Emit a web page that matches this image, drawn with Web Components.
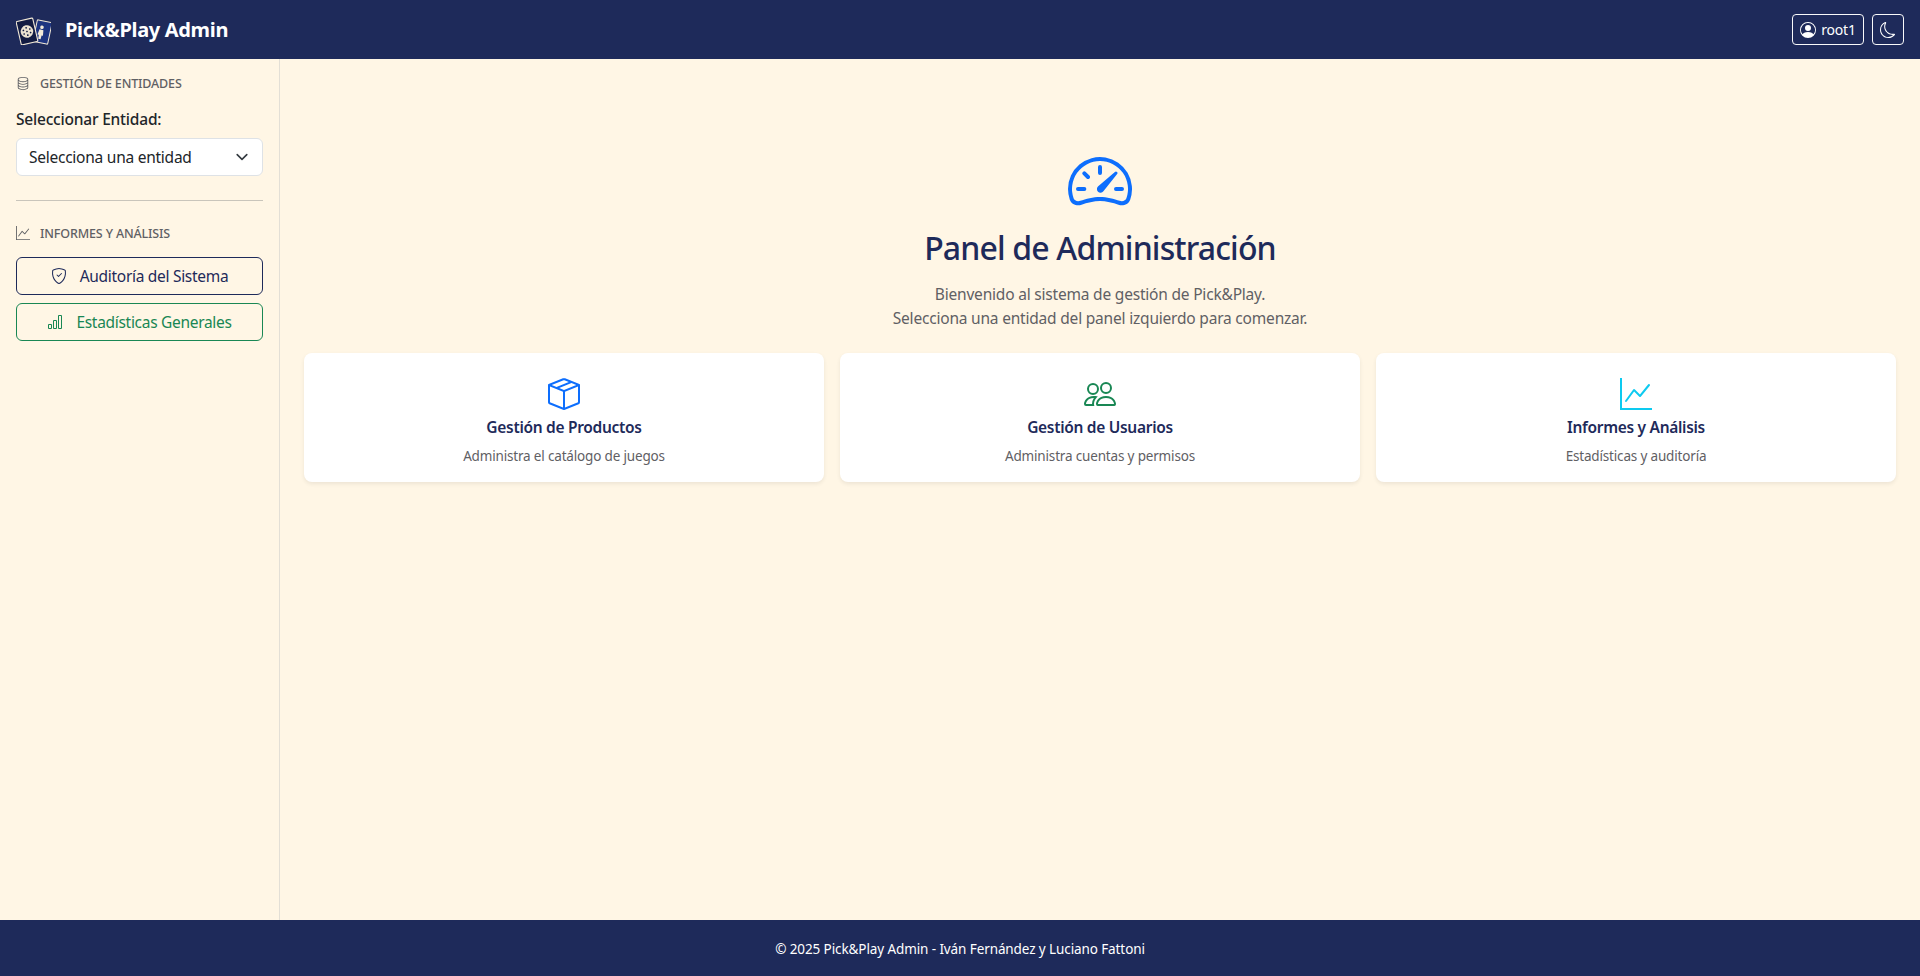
<!DOCTYPE html>
<html lang="es">
<head>
<meta charset="utf-8">
<title>Pick&amp;Play Admin</title>
<style>
  html, body { margin: 0; height: 100%; }
  body {
    font-family: "Noto Sans", "Open Sans", sans-serif;
    font-size: 16px;
    color: #212529;
    background: #fff6e5;
  }
</style>
</head>
<body>
<admin-app>
  <app-header slot="header"></app-header>
  <app-sidebar slot="sidebar">
    <side-section icon="database" title="Gestión de entidades">
      <entity-select label="Seleccionar Entidad:" placeholder="Selecciona una entidad"></entity-select>
    </side-section>
    <side-section icon="graph-up" title="Informes y análisis" divided>
      <nav-button icon="shield-check" color="#1e2a5a">Auditoría del Sistema</nav-button>
      <nav-button icon="bar-chart" color="#198754">Estadísticas Generales</nav-button>
    </side-section>
  </app-sidebar>
  <welcome-panel slot="main">
    <info-card icon="box-seam" color="#0d6efd" title="Gestión de Productos">Administra el catálogo de juegos</info-card>
    <info-card icon="people" color="#198754" title="Gestión de Usuarios">Administra cuentas y permisos</info-card>
    <info-card icon="graph-up" color="#0dcaf0" title="Informes y Análisis">Estadísticas y auditoría</info-card>
  </welcome-panel>
  <app-footer slot="footer">© 2025 Pick&amp;Play Admin - Iván Fernández y Luciano Fattoni</app-footer>
</admin-app>

<script>
const ICONS = {
  'speedometer2': 'M8 4a.5.5 0 0 1 .5.5V6a.5.5 0 0 1-1 0V4.5A.5.5 0 0 1 8 4M3.732 5.732a.5.5 0 0 1 .707 0l.915.914a.5.5 0 1 1-.708.708l-.914-.915a.5.5 0 0 1 0-.707M2 10a.5.5 0 0 1 .5-.5h1.586a.5.5 0 0 1 0 1H2.5A.5.5 0 0 1 2 10m9.5 0a.5.5 0 0 1 .5-.5h1.5a.5.5 0 0 1 0 1H12a.5.5 0 0 1-.5-.5m.754-4.246a.39.39 0 0 0-.527-.02L7.547 9.31a.91.91 0 1 0 1.302 1.258l3.434-4.297a.39.39 0 0 0-.029-.518z M0 10a8 8 0 1 1 15.547 2.661c-.442 1.253-1.845 1.602-2.932 1.25C11.309 13.488 9.475 13 8 13c-1.474 0-3.31.488-4.615.911-1.087.352-2.49.003-2.932-1.25A8 8 0 0 1 0 10m8-7a7 7 0 0 0-6.603 9.329c.203.575.923.876 1.68.63C4.397 12.533 6.358 12 8 12s3.604.532 4.923.96c.757.245 1.477-.056 1.68-.631A7 7 0 0 0 8 3',
  'box-seam': 'M8.186 1.113a.5.5 0 0 0-.372 0L1.846 3.5l2.404.961L10.404 2zm3.564 1.426L5.596 5 8 5.961 14.154 3.5zm3.25 1.7-6.5 2.6v7.922l6.5-2.6V4.24zM7.5 14.762V6.838L1 4.239v7.925zM7.443.184a1.5 1.5 0 0 1 1.114 0l7.129 2.852A.5.5 0 0 1 16 3.5v8.662a1 1 0 0 1-.629.928l-7.185 2.874a.5.5 0 0 1-.372 0L.63 13.09a1 1 0 0 1-.63-.928V3.5a.5.5 0 0 1 .314-.464z',
  'people': 'M15 14s1 0 1-1-1-4-5-4-5 3-5 4 1 1 1 1zm-7.978-1L7 12.996c.001-.264.167-1.03.76-1.72C8.312 10.629 9.282 10 11 10c1.717 0 2.687.63 3.24 1.276.593.69.758 1.457.76 1.72l-.008.002-.014.002zM11 7a2 2 0 1 0 0-4 2 2 0 0 0 0 4m3-2a3 3 0 1 1-6 0 3 3 0 0 1 6 0M6.936 9.28a6 6 0 0 0-1.23-.247A7 7 0 0 0 5 9c-4 0-5 3-5 4q0 1 1 1h4.216A2.24 2.24 0 0 1 5 13c0-1.01.377-2.042 1.09-2.904.243-.294.526-.569.846-.816M4.92 10A5.5 5.5 0 0 0 4 13H1c0-.26.164-1.03.76-1.724.545-.636 1.492-1.256 3.16-1.275ZM1.5 5.5a3 3 0 1 1 6 0 3 3 0 0 1-6 0m3-2a2 2 0 1 0 0 4 2 2 0 0 0 0-4',
  'graph-up': 'M0 0h1v15h15v1H0zm14.817 3.113a.5.5 0 0 1 .07.704l-4.5 5.5a.5.5 0 0 1-.74.037L7.06 6.767l-3.656 5.027a.5.5 0 0 1-.808-.588l4-5.5a.5.5 0 0 1 .758-.06l2.609 2.61 4.15-5.073a.5.5 0 0 1 .704-.07',
  'database': 'M4.318 2.687C5.234 2.271 6.536 2 8 2s2.766.27 3.682.687C12.644 3.125 13 3.627 13 4c0 .374-.356.875-1.318 1.313C10.766 5.729 9.464 6 8 6s-2.766-.27-3.682-.687C3.356 4.875 3 4.373 3 4c0-.374.356-.875 1.318-1.313M13 5.698V7c0 .374-.356.875-1.318 1.313C10.766 8.729 9.464 9 8 9s-2.766-.27-3.682-.687C3.356 7.875 3 7.373 3 7V5.698c.271.202.58.378.904.525C4.978 6.711 6.427 7 8 7s3.022-.289 4.096-.777A5 5 0 0 0 13 5.698M14 4c0-1.007-.875-1.755-1.904-2.223C11.022 1.289 9.573 1 8 1s-3.022.289-4.096.777C2.875 2.245 2 2.993 2 4v9c0 1.007.875 1.755 1.904 2.223C4.978 15.71 6.427 16 8 16s3.022-.289 4.096-.777C13.125 14.755 14 14.007 14 13zm-1 4.698V10c0 .374-.356.875-1.318 1.313C10.766 11.729 9.464 12 8 12s-2.766-.27-3.682-.687C3.356 10.875 3 10.373 3 10V8.698c.271.202.58.378.904.525C4.978 9.71 6.427 10 8 10s3.022-.289 4.096-.777A5 5 0 0 0 13 8.698m0 3V13c0 .374-.356.875-1.318 1.313C10.766 14.729 9.464 15 8 15s-2.766-.27-3.682-.687C3.356 13.875 3 13.373 3 13v-1.302c.271.202.58.378.904.525C4.978 12.71 6.427 13 8 13s3.022-.289 4.096-.777c.324-.147.633-.323.904-.525',
  'shield-check': 'M5.338 1.59a61 61 0 0 0-2.837.856.48.48 0 0 0-.328.39c-.554 4.157.726 7.19 2.253 9.188a10.7 10.7 0 0 0 2.287 2.233c.346.244.652.42.893.533q.18.085.293.118a1 1 0 0 0 .101.025 1 1 0 0 0 .1-.025q.114-.034.294-.118c.24-.113.547-.29.893-.533a10.7 10.7 0 0 0 2.287-2.233c1.527-1.997 2.807-5.031 2.253-9.188a.48.48 0 0 0-.328-.39c-.651-.213-1.75-.56-2.837-.855C9.552 1.29 8.531 1.067 8 1.067c-.53 0-1.552.223-2.662.524zM5.072.56C6.157.265 7.31 0 8 0s1.843.265 2.928.56c1.11.3 2.229.655 2.887.87a1.54 1.54 0 0 1 1.044 1.262c.596 4.477-.787 7.795-2.465 9.99a11.8 11.8 0 0 1-2.517 2.453 7 7 0 0 1-1.048.625c-.28.132-.581.24-.829.24s-.548-.108-.829-.24a7 7 0 0 1-1.048-.625 11.8 11.8 0 0 1-2.517-2.453C1.928 10.487.545 7.169 1.141 2.692A1.54 1.54 0 0 1 2.185 1.43 63 63 0 0 1 5.072.56 M10.854 5.146a.5.5 0 0 1 0 .708l-3 3a.5.5 0 0 1-.708 0l-1.5-1.5a.5.5 0 1 1 .708-.708L7.5 7.793l2.646-2.647a.5.5 0 0 1 .708 0',
  'bar-chart': 'M4 11H2v3h2zm5-4H7v7h2zm5-5v12h-2V2zm-2-1a1 1 0 0 0-1 1v12a1 1 0 0 0 1 1h2a1 1 0 0 0 1-1V2a1 1 0 0 0-1-1zM6 7a1 1 0 0 1 1-1h2a1 1 0 0 1 1 1v7a1 1 0 0 1-1 1H7a1 1 0 0 1-1-1zm-5 4a1 1 0 0 1 1-1h2a1 1 0 0 1 1 1v3a1 1 0 0 1-1 1H2a1 1 0 0 1-1-1z',
  'person-circle': 'M11 6a3 3 0 1 1-6 0 3 3 0 0 1 6 0 M0 8a8 8 0 1 1 16 0A8 8 0 0 1 0 8m8-7a7 7 0 0 0-5.468 11.37C3.242 11.226 4.805 10 8 10s4.757 1.225 5.468 2.37A7 7 0 0 0 8 1',
  'moon': 'M6 .278a.77.77 0 0 1 .08.858 7.2 7.2 0 0 0-.878 3.46c0 4.021 3.278 7.277 7.318 7.277q.792-.001 1.533-.16a.79.79 0 0 1 .81.316.73.73 0 0 1-.031.893A8.35 8.35 0 0 1 8.344 16C3.734 16 0 12.286 0 7.71 0 4.266 2.114 1.312 5.124.06A.75.75 0 0 1 6 .278M4.858 1.311A7.27 7.27 0 0 0 1.025 7.71c0 4.02 3.279 7.276 7.319 7.276a7.32 7.32 0 0 0 5.205-2.162q-.506.063-1.029.063c-4.61 0-8.343-3.714-8.343-8.29 0-1.167.242-2.278.681-3.286'
}

const iconMarkup = (name, size, color = 'currentColor') =>
  `<svg xmlns="http://www.w3.org/2000/svg" width="${size}" height="${size}" viewBox="0 0 16 16" fill="${color}" style="display:block;flex:none"><path fill-rule="evenodd" d="${ICONS[name]}"/></svg>`

/**
 * Defines a custom element whose shadow root holds the given markup.
 */
const define = (name, html, onCreate) => {
  const template = document.createElement('template')
  template.innerHTML = html
  customElements.define(name, class extends HTMLElement {
    constructor () {
      super()
      this.attachShadow({ mode: 'open' })
        .appendChild(template.content.cloneNode(true))
    }

    connectedCallback () {
      if (onCreate) onCreate(this, this.shadowRoot)
    }
  })
}

define('admin-app', `
  <style>
    :host {
      display: grid;
      grid-template: 59px 861px 56px / 280px 1fr;
      height: 976px;
      overflow: hidden;
    }
    ::slotted([slot=header]), ::slotted([slot=footer]) { grid-column: 1 / -1; }
  </style>
  <slot name="header"></slot>
  <slot name="sidebar"></slot>
  <slot name="main"></slot>
  <slot name="footer"></slot>
`)

define('app-header', `
  <style>
    :host {
      display: flex;
      align-items: center;
      justify-content: space-between;
      background: #1e2a5a;
      color: #fff;
      padding: 0 16px;
    }
    .brand { display: flex; align-items: center; gap: 14px; }
    .brand svg { display: block; }
    .title { font-size: 20px; font-weight: 700; letter-spacing: -0.33px; line-height: 24px; }
    .actions { display: flex; gap: 8px; }
    button {
      display: flex;
      align-items: center;
      justify-content: center;
      gap: 5px;
      height: 31px;
      box-sizing: border-box;
      padding: 0 8px;
      background: transparent;
      color: #fff;
      border: 1px solid #f8f9fa;
      border-radius: 4px;
      font: inherit;
      font-size: 14px;
      letter-spacing: -0.2px;
    }
    #user { width: 72px; }
    #theme { width: 32px; padding: 0; }
  </style>
  <div class="brand">
    <svg width="35" height="30" viewBox="0 0 35 30">
      <g transform="rotate(12 26.5 17)">
        <rect x="19" y="6" width="15" height="22" rx="1" fill="#1d3480" stroke="#f3ead8" stroke-width="1"/>
        <circle cx="25" cy="12.5" r="1.8" fill="#f3ead8"/>
        <path d="M23 15h4l.7 5.5h-1.4l-.2 4h-2.4l-.2-4h-1.4z" fill="#f3ead8"/>
      </g>
      <g transform="rotate(-13 11 16.5)">
        <rect x="2.5" y="4.5" width="17" height="24" rx="1" fill="#121b42" stroke="#f3ead8" stroke-width="1.1"/>
        <circle cx="11" cy="16.5" r="6.3" fill="#e9e1d0"/>
        <g fill="#121b42">
          <circle cx="11" cy="12.7" r=".85"/><circle cx="7.7" cy="14.7" r=".85"/><circle cx="14.3" cy="14.7" r=".85"/>
          <circle cx="7.7" cy="18.3" r=".85"/><circle cx="14.3" cy="18.3" r=".85"/>
          <circle cx="11" cy="20.3" r=".85"/><circle cx="11" cy="16.5" r=".85"/>
        </g>
      </g>
    </svg>
    <span class="title">Pick&amp;Play Admin</span>
  </div>
  <div class="actions">
    <button id="user">${iconMarkup('person-circle', 16)}<span>root1</span></button>
    <button id="theme">${iconMarkup('moon', 16)}</button>
  </div>
`)

define('app-sidebar', `
  <style>
    :host {
      display: block;
      box-sizing: border-box;
      border-right: 1px solid #e3dfd6;
      padding: 16px;
    }
  </style>
  <slot></slot>
`)

define('side-section', `
  <style>
    :host { display: block; }
    :host([divided]) {
      border-top: 1px solid #c9c5bb;
      margin-top: 24px;
      padding-top: 24px;
    }
    h6 {
      display: flex;
      align-items: center;
      gap: 10px;
      margin: 0 0 16px;
      height: 16px;
      font-size: 12.5px;
      font-weight: 500;
      letter-spacing: -0.15px;
      text-transform: uppercase;
      color: #5f6064;
    }
    .body { display: flex; flex-direction: column; gap: 8px; }
  </style>
  <h6><span id="icon"></span><span id="title"></span></h6>
  <div class="body"><slot></slot></div>
`, (host, root) => {
  root.querySelector('#icon').innerHTML = iconMarkup(host.getAttribute('icon'), 14)
  root.querySelector('#title').textContent = host.getAttribute('title')
})

define('entity-select', `
  <style>
    :host { display: block; }
    label {
      display: block;
      font-weight: 500;
      font-size: 15.5px;
      letter-spacing: -0.2px;
      line-height: 24px;
      margin: 0 0 7px;
    }
    .wrap { position: relative; }
    select {
      display: block;
      width: 100%;
      height: 38px;
      appearance: none;
      padding: 0 36px 0 12px;
      background: #fff;
      color: #212529;
      border: 1px solid #dee2e6;
      border-radius: 6px;
      font: inherit;
      font-size: 15.5px;
      letter-spacing: -0.25px;
    }
    svg { position: absolute; right: 13px; top: 11px; }
  </style>
  <label id="label"></label>
  <div class="wrap">
    <select><option id="option"></option></select>
    <svg width="16" height="16" viewBox="0 0 16 16" fill="none" stroke="#343a40" stroke-width="2" stroke-linecap="round" stroke-linejoin="round"><path d="m2 5 6 6 6-6" transform="translate(1.6 1.6) scale(.8)"/></svg>
  </div>
`, (host, root) => {
  root.querySelector('#label').textContent = host.getAttribute('label')
  root.querySelector('#option').textContent = host.getAttribute('placeholder')
})

define('nav-button', `
  <style>
    :host { display: block; }
    button {
      display: flex;
      align-items: center;
      justify-content: center;
      gap: 13px;
      width: 100%;
      height: 38px;
      padding: 0;
      background: transparent;
      border: 1px solid currentColor;
      border-radius: 6px;
      font: inherit;
      font-size: 15.5px;
      letter-spacing: -0.3px;
      color: var(--c);
    }
  </style>
  <button><span id="icon"></span><slot></slot></button>
`, (host, root) => {
  host.style.setProperty('--c', host.getAttribute('color'))
  root.querySelector('#icon').innerHTML = iconMarkup(host.getAttribute('icon'), 16)
})

define('welcome-panel', `
  <style>
    :host {
      display: block;
      box-sizing: border-box;
      padding: 90px 24px 24px;
      text-align: center;
    }
    svg { margin: 0 auto 16px; }
    h1 {
      margin: 0 0 15px;
      font-size: 32px;
      font-weight: 500;
      line-height: 38px;
      letter-spacing: -0.85px;
      color: #1e2a5a;
    }
    p {
      margin: 0 0 23px;
      font-size: 15.5px;
      line-height: 24px;
      letter-spacing: -0.2px;
      color: #5f6064;
    }
    .cards { display: grid; grid-template-columns: repeat(3, 1fr); gap: 16px; }
  </style>
  ${iconMarkup('speedometer2', 64, '#0d6efd')}
  <h1>Panel de Administración</h1>
  <p>Bienvenido al sistema de gestión de Pick&amp;Play.<br>Selecciona una entidad del panel izquierdo para comenzar.</p>
  <div class="cards"><slot></slot></div>
`)

define('info-card', `
  <style>
    :host {
      display: block;
      box-sizing: border-box;
      height: 129px;
      padding: 25px 16px 16px;
      background: #fff;
      border-radius: 8px;
      box-shadow: 0 2px 4px rgba(0, 0, 0, .075);
      text-align: center;
    }
    #icon svg { margin: 0 auto 8px; }
    h5 {
      margin: 0 0 9px;
      font-size: 15.5px;
      font-weight: 600;
      line-height: 19px;
      letter-spacing: -0.3px;
      color: #1e2a5a;
    }
    p {
      margin: 0;
      font-size: 13.5px;
      line-height: 21px;
      letter-spacing: -0.17px;
      color: #5f6064;
    }
  </style>
  <div id="icon"></div>
  <h5 id="title"></h5>
  <p><slot></slot></p>
`, (host, root) => {
  root.querySelector('#icon').innerHTML = iconMarkup(host.getAttribute('icon'), 32, host.getAttribute('color'))
  root.querySelector('#title').textContent = host.getAttribute('title')
})

define('app-footer', `
  <style>
    :host {
      display: flex;
      align-items: center;
      justify-content: center;
      padding-top: 2px;
      box-sizing: border-box;
      background: #1e2a5a;
      color: #fff;
      font-size: 13.5px;
      letter-spacing: -0.1px;
    }
  </style>
  <slot></slot>
`)
</script>
</body>
</html>
